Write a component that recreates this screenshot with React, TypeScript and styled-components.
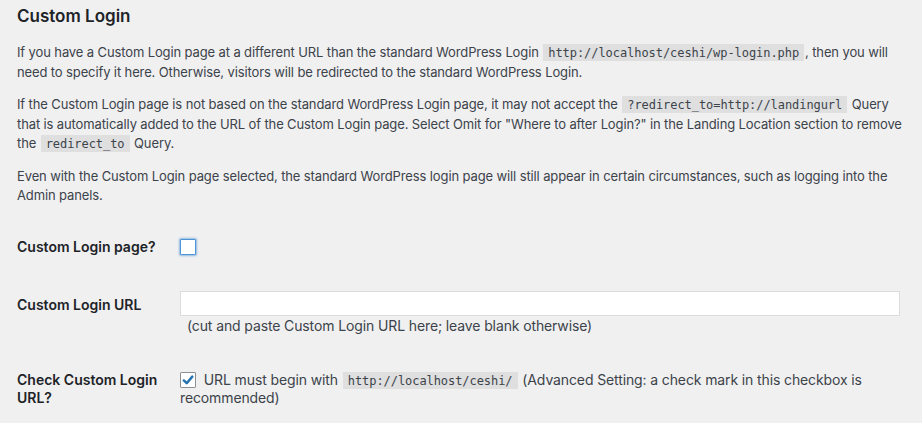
import styled, { createGlobalStyle } from "styled-components";

const GlobalStyle = createGlobalStyle`
  html, body {
    margin: 0;
    padding: 0;
    background: #f0f0f1;
  }
  body {
    font-family: Inter, "Liberation Sans", sans-serif;
    font-size: 13px;
    color: #3c434a;
  }
`;

const Wrap = styled.div`
  padding: 5px 10px 0 17px;
`;

const Title = styled.h2`
  margin: 0 0 16px;
  font-size: 17px;
  line-height: 22px;
  font-weight: 600;
  color: #1d2327;
`;

const Intro = styled.div`
  display: flex;
  flex-direction: column;
  gap: 13px;
  margin-bottom: 12px;
`;

const Text = styled.p`
  margin: 0;
  font-size: 13px;
  line-height: 19.5px;
  letter-spacing: -0.12px;
`;

const Code = styled.code`
  font-family: "DejaVu Sans Mono", "Liberation Mono", monospace;
  font-size: 12px;
  line-height: 1;
  letter-spacing: -0.06px;
  background: rgba(0, 0, 0, 0.07);
  padding: 2px 5px 1px;
  margin: 0 1px;
`;

const FormTable = styled.div`
  display: flex;
  flex-direction: column;
`;

const Row = styled.div`
  display: flex;
  align-items: flex-start;
`;

const Label = styled.div`
  width: 153px;
  flex-shrink: 0;
  padding: 20px 10px 20px 0;
  font-size: 14px;
  line-height: 18.2px;
  font-weight: 600;
  color: #1d2327;
`;

const Field = styled.div<{ $top: number }>`
  flex: 1;
  padding: ${(p) => p.$top}px 10px 15px 0;
  font-size: 14px;
  line-height: 18.2px;
  letter-spacing: -0.12px;
`;

const Box = styled.span<{ $focus?: boolean }>`
  display: inline-block;
  box-sizing: border-box;
  width: 16px;
  height: 16px;
  margin: 0 4px 0 0;
  vertical-align: -3px;
  background: #fff;
  border: 1px solid ${(p) => (p.$focus ? "#4f94d4" : "#8c8f94")};
  box-shadow: ${(p) =>
    p.$focus ? "0 0 2px 1px rgba(79, 148, 212, 0.6)" : "none"};
  border-radius: 1px;
  position: relative;
  svg {
    position: absolute;
    left: -1px;
    top: -1px;
  }
`;

const UrlInput = styled.input`
  display: block;
  box-sizing: border-box;
  width: 720px;
  height: 25px;
  margin: 0;
  border: 1px solid #dcdcde;
  background: #fff;
  font: inherit;
`;

const Hint = styled.div`
  padding-left: 7px;
  line-height: 20px;
`;

function Check({ checked, focus }: { checked?: boolean; focus?: boolean }) {
  return (
    <Box $focus={focus}>
      {checked && (
        <svg width="16" height="16" viewBox="0 0 16 16">
          <path
            d="M3.8 8.4 L6.7 11.2 L12.3 4.6"
            fill="none"
            stroke="#2271b1"
            strokeWidth="2.4"
            strokeLinecap="round"
            strokeLinejoin="round"
          />
        </svg>
      )}
    </Box>
  );
}

export default function App() {
  return (
    <>
      <GlobalStyle />
      <Wrap>
        <Title>Custom Login</Title>
        <Intro>
          <Text>
            If you have a Custom Login page at a different URL than the standard
            WordPress Login <Code>http://localhost/ceshi/wp-login.php</Code>,
            then you will need to specify it here. Otherwise, visitors will be
            redirected to the standard WordPress Login.
          </Text>
          <Text>
            If the Custom Login page is not based on the standard WordPress Login
            page, it may not accept the{" "}
            <Code>?redirect_to=http://landingurl</Code> Query that is
            automatically added to the URL of the Custom Login page. Select Omit
            for "Where to after Login?" in the Landing Location section to remove
            the <Code>redirect_to</Code> Query.
          </Text>
          <Text>
            Even with the Custom Login page selected, the standard WordPress
            login page will still appear in certain circumstances, such as
            logging into the Admin panels.
          </Text>
        </Intro>
        <FormTable>
          <Row>
            <Label>Custom Login page?</Label>
            <Field $top={20}>
              <Check focus />
            </Field>
          </Row>
          <Row>
            <Label>Custom Login URL</Label>
            <Field $top={15}>
              <UrlInput type="text" />
              <Hint>(cut and paste Custom Login URL here; leave blank otherwise)</Hint>
            </Field>
          </Row>
          <Row>
            <Label>Check Custom Login URL?</Label>
            <Field $top={20}>
              <Check checked /> URL must begin with{" "}
              <Code>http://localhost/ceshi/</Code> (Advanced Setting: a check
              mark in this checkbox is recommended)
            </Field>
          </Row>
        </FormTable>
      </Wrap>
    </>
  );
}
